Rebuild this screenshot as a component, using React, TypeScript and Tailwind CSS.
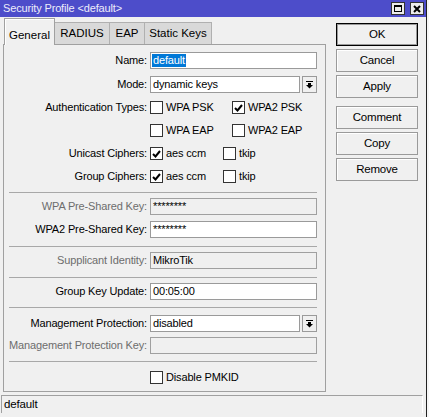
import React from "react";

function Check({ checked }: { checked?: boolean }) {
  return (
    <div className="w-[13px] h-[13px] border border-[#333333] bg-white flex items-center justify-center shrink-0">
      {checked && (
        <svg width="9" height="8" viewBox="0 0 9 8">
          <path d="M1 4 L3.5 6.5 L8 1" stroke="#000" strokeWidth="2" fill="none" />
        </svg>
      )}
    </div>
  );
}

function CheckItem({ label, checked, w }: { label: string; checked?: boolean; w: string }) {
  return (
    <div className={`flex items-center gap-[3px] ${w}`}>
      <Check checked={checked} />
      <span>{label}</span>
    </div>
  );
}

function Row({
  label,
  disabled,
  mt,
  children,
}: {
  label: string;
  disabled?: boolean;
  mt: string;
  children: React.ReactNode;
}) {
  return (
    <div className={`flex items-center h-[17px] ${mt}`}>
      <div className={`w-[143px] text-right whitespace-nowrap ${disabled ? "text-[#6d6d6d]" : "text-black"}`}>
        {label}
      </div>
      <div className="ml-[3px] w-[167px] h-full flex items-center">{children}</div>
    </div>
  );
}

function Input({ value, disabled, selected }: { value?: string; disabled?: boolean; selected?: boolean }) {
  return (
    <div
      className={`w-full h-full border flex items-center pl-[1px] ${
        disabled ? "bg-[#f0f0f0] border-[#a0a0a0]" : "bg-white border-[#9a9a9a]"
      }`}
    >
      {selected ? (
        <span className="bg-[#0078d7] text-white leading-[13px] px-[1px]">{value}</span>
      ) : (
        <span className="px-[1px]">{value}</span>
      )}
    </div>
  );
}

function DropIcon() {
  return (
    <svg width="7" height="8" viewBox="0 0 7 8">
      <rect x="0" y="0" width="7" height="1" fill="#000" />
      <rect x="2" y="2" width="3" height="2" fill="#000" />
      <polygon points="0,4 7,4 3.5,7.5" fill="#000" />
    </svg>
  );
}

function Select({ value }: { value: string }) {
  return (
    <div className="w-full h-full flex">
      <div className="w-[150px] h-full bg-white border border-[#9a9a9a] flex items-center pl-[2px]">{value}</div>
      <div className="ml-[2px] w-[15px] h-full bg-[#f0f0f0] border border-[#9a9a9a] flex items-center justify-center">
        <DropIcon />
      </div>
    </div>
  );
}

function Sep({ mt }: { mt: string }) {
  return <div className={`ml-[5px] w-[308px] h-px bg-[#a8a8a8] ${mt}`} />;
}

function Btn({ label, def, mt }: { label: string; def?: boolean; mt: string }) {
  return (
    <div
      className={`w-[82px] h-[23px] flex items-center justify-center text-[11.5px] tracking-[-0.2px] bg-[#f0f0f0] ${mt} ${
        def ? "border border-black shadow-[inset_0_0_0_1px_#9a9a9a]" : "border border-[#9a9a9a] shadow-[inset_1px_1px_0_#ffffff]"
      }`}
    >
      {label}
    </div>
  );
}

export default function App() {
  return (
    <div className="w-[429px] h-[417px] bg-[#f0f0f0] flex overflow-hidden font-['Liberation_Sans',Arial,sans-serif] text-[11px] tracking-[-0.15px] text-black">
      <div className="w-[427px] h-full flex flex-col border-r border-[#222]">
        {/* Title bar */}
        <div className="h-[17px] bg-[#4d4dca] flex items-center pl-[3px] pr-[2px] shrink-0">
          <span className="text-[11px] text-[#ececfa] leading-none">Security Profile &lt;default&gt;</span>
          <div className="ml-auto flex gap-[5px] items-center">
            <div className="w-[14px] h-[13px] bg-[#ececec] border border-[#333] flex items-center justify-center">
              <div className="w-[8px] h-[7px] border border-black border-t-2" />
            </div>
            <div className="w-[14px] h-[13px] bg-[#ececec] border border-[#333] flex items-center justify-center">
              <svg width="8" height="8" viewBox="0 0 8 8">
                <path d="M1 1 L7 7 M7 1 L1 7" stroke="#000" strokeWidth="2" />
              </svg>
            </div>
          </div>
        </div>

        {/* Body */}
        <div className="flex shrink-0">
          <div className="w-[330px] pl-[3px]">
            {/* Tabs */}
            <div className="h-[27px] flex items-end pl-[1px] text-[11.5px] tracking-normal">
              <div className="w-[51px] h-[27px] mb-[-1px] relative z-10 bg-[#f0f0f0] border-l border-t border-r border-[#a0a0a0] shadow-[inset_1px_1px_0_#ffffff] flex justify-center pt-[8px]">
                General
              </div>
              <div className="w-[55px] h-[22px] bg-[#d9d9d9] border-t border-r border-[#b0b0b0] flex items-center justify-center">
                RADIUS
              </div>
              <div className="w-[35px] h-[22px] bg-[#d9d9d9] border-t border-r border-[#b0b0b0] flex items-center justify-center">
                EAP
              </div>
              <div className="w-[67px] h-[22px] bg-[#d9d9d9] border-t border-r border-[#b0b0b0] flex items-center justify-center">
                Static Keys
              </div>
            </div>
            {/* Panel */}
            <div className="w-[323px] h-[348px] border border-[#a0a0a0] flex flex-col">
              <Row label="Name:" mt="mt-[7px]">
                <Input value="default" selected />
              </Row>
              <Row label="Mode:" mt="mt-[7px]">
                <Select value="dynamic keys" />
              </Row>
              <Row label="Authentication Types:" mt="mt-[6px]">
                <CheckItem label="WPA PSK" w="w-[82px]" />
                <CheckItem label="WPA2 PSK" checked w="w-[82px]" />
              </Row>
              <Row label="" mt="mt-[6px]">
                <CheckItem label="WPA EAP" w="w-[82px]" />
                <CheckItem label="WPA2 EAP" w="w-[82px]" />
              </Row>
              <Row label="Unicast Ciphers:" mt="mt-[6px]">
                <CheckItem label="aes ccm" checked w="w-[73px]" />
                <CheckItem label="tkip" w="w-[60px]" />
              </Row>
              <Row label="Group Ciphers:" mt="mt-[6px]">
                <CheckItem label="aes ccm" checked w="w-[73px]" />
                <CheckItem label="tkip" w="w-[60px]" />
              </Row>
              <Sep mt="mt-[7px]" />
              <Row label="WPA Pre-Shared Key:" disabled mt="mt-[5px]">
                <Input value="********" disabled />
              </Row>
              <Row label="WPA2 Pre-Shared Key:" mt="mt-[6px]">
                <Input value="********" />
              </Row>
              <Sep mt="mt-[8px]" />
              <Row label="Supplicant Identity:" disabled mt="mt-[5px]">
                <Input value="MikroTik" disabled />
              </Row>
              <Sep mt="mt-[8px]" />
              <Row label="Group Key Update:" mt="mt-[5px]">
                <Input value="00:05:00" />
              </Row>
              <Sep mt="mt-[7px]" />
              <Row label="Management Protection:" mt="mt-[7px]">
                <Select value="disabled" />
              </Row>
              <Row label="Management Protection Key:" disabled mt="mt-[5px]">
                <Input disabled />
              </Row>
              <Sep mt="mt-[7px]" />
              <Row label="" mt="mt-[7px]">
                <CheckItem label="Disable PMKID" w="w-[120px]" />
              </Row>
            </div>
          </div>
          {/* Buttons */}
          <div className="ml-[6px] flex flex-col pt-[6px]">
            <Btn label="OK" def mt="mt-0" />
            <Btn label="Cancel" mt="mt-[3px]" />
            <Btn label="Apply" mt="mt-[3px]" />
            <Btn label="Comment" mt="mt-[8px]" />
            <Btn label="Copy" mt="mt-[3px]" />
            <Btn label="Remove" mt="mt-[3px]" />
          </div>
        </div>

        {/* Status bar */}
        <div className="mt-[3px] ml-[1px] w-[422px] h-[18px] border-t border-l border-[#a0a0a0] border-r border-r-white flex items-center pl-[2px] text-[11.5px]">
          default
        </div>
      </div>
      <div className="flex-1 bg-[#f6f6f6]" />
    </div>
  );
}
